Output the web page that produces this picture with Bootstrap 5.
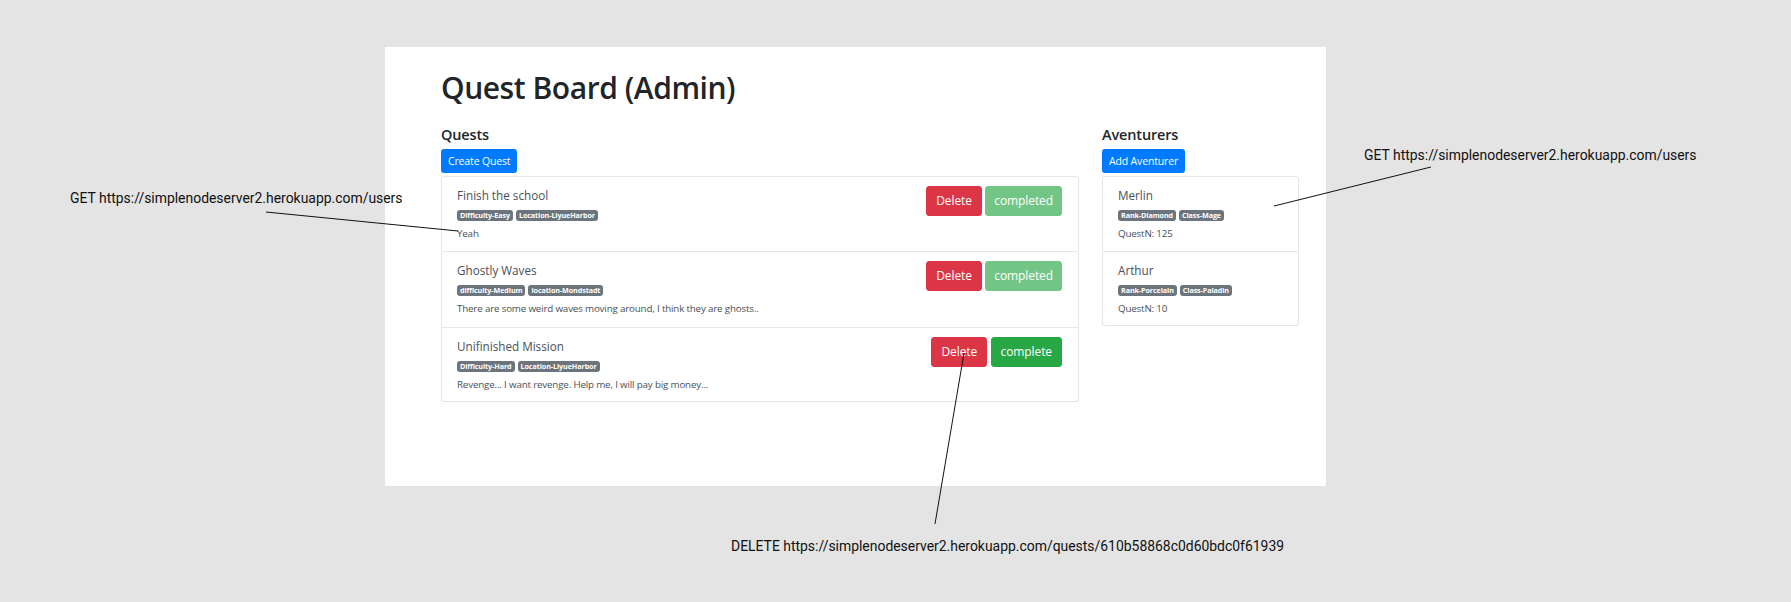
<!DOCTYPE html>
<html lang="en">
<head>
<meta charset="utf-8">
<title>Quest Board (Admin)</title>
<link href="https://cdn.jsdelivr.net/npm/bootstrap@5.3.0/dist/css/bootstrap.min.css" rel="stylesheet">
<style>
html,body{margin:0;height:602px;overflow:hidden}
body{background:#e4e4e4;font-family:"Open Sans","Liberation Sans",sans-serif;color:#212529;position:relative}
.sheet{background:#fff;width:941px;height:439px;margin-left:385px;position:absolute;top:47px;padding:21px 27px 0 56px}
.sheet-title{font-size:30px;font-weight:600;line-height:40px;margin:0 0 17px;letter-spacing:-.45px}
.col-quests{width:638px}
.col-heroes{width:197px}
.col-title{font-size:14.5px;font-weight:600;line-height:20px;margin:0 0 4px;letter-spacing:-.15px}
.add-btn{font-size:10.5px;line-height:14px;padding:4px 6px;height:24px;border-radius:2.5px;background:#007bff;border-color:#007bff;margin-bottom:3px;display:block;letter-spacing:-.15px}
.board{border-radius:3px;font-size:10px}
.board .list-group-item{padding:8px 16px 6px 15px;height:75.8px;color:#495057;border-color:#e6e6e6}
.board .list-group-item:last-child{height:74.5px}
.entry-name{font-size:11.7px;line-height:20px;margin:0 0 5px}
.chip{font-size:7.2px;line-height:8px;padding:1px 3px 2px;border-radius:3px;background:#6c757d!important;margin-right:3px;display:inline-block;letter-spacing:-.1px}
.chips{display:flex;height:11px;margin-bottom:6px}
.entry-text{font-size:9.8px;line-height:14px;margin:0;letter-spacing:-.18px}
.acts{display:flex;gap:3.5px;align-items:flex-start;margin-top:1px}
.act{font-size:12px;line-height:16px;padding:6px 9px;height:30px;border-radius:3px;letter-spacing:-.1px}
.act-del{background:#dc3545;border-color:#dc3545}
.btn.act-ok{background:#28a745;border-color:#28a745}
.btn.act-ok.disabled{opacity:.65;background:#28a745;border-color:#28a745;padding:6px 8px}
.note{position:absolute;font-family:Roboto,sans-serif;font-size:13.93px;line-height:18px;color:#111;white-space:nowrap;margin:0}
.note-left{left:70px;top:189px}
.note-right{left:1364px;top:146px}
.note-bottom{left:731px;top:537px}
.leaders{position:absolute;left:0;top:0}
</style>
</head>
<body>
<main class="sheet">
  <h1 class="sheet-title">Quest Board (Admin)</h1>
  <div class="d-flex justify-content-between">
    <section class="col-quests">
      <h2 class="col-title">Quests</h2>
      <button class="btn btn-primary add-btn">Create Quest</button>
      <div class="list-group board">
        <div class="list-group-item d-flex justify-content-between">
          <div>
            <h3 class="entry-name fw-normal">Finish the school</h3>
            <div class="chips"><span class="badge chip">Difficulty-Easy</span><span class="badge chip">Location-LiyueHarbor</span></div>
            <p class="entry-text">Yeah</p>
          </div>
          <div class="acts"><button class="btn btn-danger act act-del">Delete</button><button class="btn btn-success act act-ok disabled">completed</button></div>
        </div>
        <div class="list-group-item d-flex justify-content-between">
          <div>
            <h3 class="entry-name fw-normal">Ghostly Waves</h3>
            <div class="chips"><span class="badge chip">difficulty-Medium</span><span class="badge chip">location-Mondstadt</span></div>
            <p class="entry-text">There are some weird waves moving around, I think they are ghosts..</p>
          </div>
          <div class="acts"><button class="btn btn-danger act act-del">Delete</button><button class="btn btn-success act act-ok disabled">completed</button></div>
        </div>
        <div class="list-group-item d-flex justify-content-between">
          <div>
            <h3 class="entry-name fw-normal">Unifinished Mission</h3>
            <div class="chips"><span class="badge chip">Difficulty-Hard</span><span class="badge chip">Location-LiyueHarbor</span></div>
            <p class="entry-text">Revenge... I want revenge. Help me, I will pay big money...</p>
          </div>
          <div class="acts"><button class="btn btn-danger act act-del">Delete</button><button class="btn btn-success act act-ok">complete</button></div>
        </div>
      </div>
    </section>
    <section class="col-heroes">
      <h2 class="col-title">Aventurers</h2>
      <button class="btn btn-primary add-btn">Add Aventurer</button>
      <div class="list-group board">
        <div class="list-group-item">
          <h3 class="entry-name fw-normal">Merlin</h3>
          <div class="chips"><span class="badge chip">Rank-Diamond</span><span class="badge chip">Class-Mage</span></div>
          <p class="entry-text">QuestN: 125</p>
        </div>
        <div class="list-group-item">
          <h3 class="entry-name fw-normal">Arthur</h3>
          <div class="chips"><span class="badge chip">Rank-Porcelain</span><span class="badge chip">Class-Paladin</span></div>
          <p class="entry-text">QuestN: 10</p>
        </div>
      </div>
    </section>
  </div>
</main>
<p class="note note-left">GET https://simplenodeserver2.herokuapp.com/users</p>
<p class="note note-right">GET https://simplenodeserver2.herokuapp.com/users</p>
<p class="note note-bottom">DELETE https://simplenodeserver2.herokuapp.com/quests/610b58868c0d60bdc0f61939</p>
<svg class="leaders" width="1791" height="602" viewBox="0 0 1791 602" fill="none" stroke="#111" stroke-width="1">
  <line x1="266" y1="212" x2="458" y2="231"/>
  <line x1="1431" y1="167" x2="1274" y2="206"/>
  <line x1="964" y1="353" x2="935" y2="524"/>
</svg>
</body>
</html>
